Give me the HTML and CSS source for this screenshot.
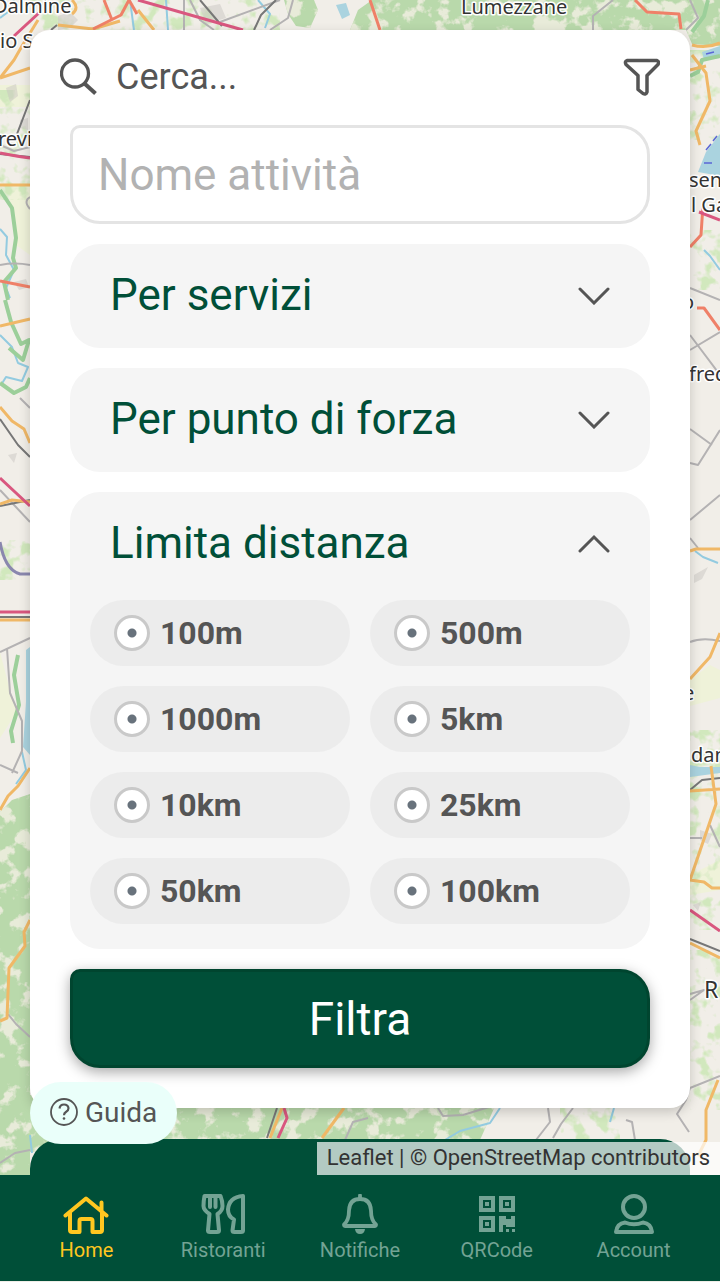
FILE: index.html
```html
<!DOCTYPE html>
<html lang="it">
<head>
<meta charset="utf-8">
<meta name="viewport" content="width=device-width, initial-scale=1">
<title>Cerca attività</title>
<link rel="stylesheet" href="styles.css">
</head>
<body>
<svg class="map" viewBox="0 0 720 1282" preserveAspectRatio="xMidYMid slice" aria-hidden="true">
  <defs>
    <filter id="patches" x="0" y="0" width="100%" height="100%" color-interpolation-filters="sRGB">
      <feTurbulence type="fractalNoise" baseFrequency="0.06" numOctaves="4" seed="8"/>
      <feColorMatrix values="0 0 0 0 .91  0 0 0 0 .92  0 0 0 0 .85  8 0 0 0 -4.2"/>
      <feComposite in2="SourceGraphic" operator="in" result="clearings"/>
      <feMerge><feMergeNode in="SourceGraphic"/><feMergeNode in="clearings"/></feMerge>
    </filter>
    <filter id="speckle" x="0" y="0" width="100%" height="100%" color-interpolation-filters="sRGB">
      <feTurbulence type="fractalNoise" baseFrequency="0.07" numOctaves="3" seed="3"/>
      <feColorMatrix values="0 0 0 0 .82  0 0 0 0 .91  0 0 0 0 .74  6 0 0 0 -3"/>
      <feComposite in2="SourceGraphic" operator="in"/>
    </filter>
  </defs>
  <rect width="720" height="1282" fill="#f1eee8"/>
  <g fill="#eff2d9">
    <path d="M0 85h30v22H0zM8 187l22-2v70l-14-10zM0 652l12 46 6 12-18 28zM690 680l20-15 10 5v28l-30 8zM690 875l30-15v30l-30 5z"/>
  </g>
  <g fill="#b9d9ab" filter="url(#patches)">
    <path d="M284 0h30l4 10-8 18-14-2-8-12zM350 30l8-20 14-10h348v46l-28-2-6-14z"/>
    <path d="M0 812l12-12 18-6v385H0zM30 1095h470l-20 45-20 12H30z"/>
  </g>
  <g fill="#8fb783" filter="url(#speckle)">
    <path d="M30 0h250v30H30zM0 90h30v110H0zM690 50h30v90h-30zM690 230h30v60h-30zM0 540h30v40H0zM690 730h30v200h-30zM690 950h30v160h-30zM560 1105h60v35h-60z"/>
  </g>
  <g fill="#c9c6c2" opacity=".5">
    <path d="M58 16l12-4 8 8-8 8-12 2zM6 88l10-4 2 12-8 6zM20 120l8-2v12l-8-2zM14 282l12-3 3 8-10 3zM8 455l9-2-3 10zM694 575l14-8-6 12-8 4zM700 830l12 4-4 10-8-4zM693 905l8-3-3 9zM200 8l20-4 6 14-20 6z"/>
  </g>
  <g fill="#aad3df">
    <path d="M720 134l-14 18-8 20 22 4zM702 52l18-6v12l-16 2zM336 5l10-2 4 12-8 4zM26 650l4-3v108l-7-8 3-45zM690 765l10 2 20 0v6l-30 4z"/>
  </g>
  <g class="river">
    <path d="M130 0l4 30M166 0l2 30M14 0l-6 12-8 6M0 229l7 8-1 18 8 15-8 18 4 10M0 335l12 12 6 16 10 4-6 14-16-4-5 8M22 752l4 18-10 14M704 250l6 6 10 14M695 551l8 6 15 6M30 1135l2 18M500 1108l-10 15-30 8-15 9M614 1108l-4 14M258 0l12 14-5 14"/>
  </g>
  <g class="park">
    <path d="M0 190l12 18 4 30-3 20 3 10-12 14 4 18M5 300l6 22 10 22 8-4-6 20-14-12M0 383l14 10 12-6 4-9M18 655l-4 20 5 30-8 26 2 12M708 0l-4 16-12 16M690 76l8-4 4-12 18-4"/>
  </g>
  <g class="minor">
    <path d="M0 265q15-3 30 0M30 197q-7 4 0 12M0 145l14 6 16-4M30 408l-10-10M0 490l30 32M0 652l30-14M7 648l3 45 12 28v30l-10 22M0 765l18 8M8 1014l8 10 14 13M0 1163l15-10 15-3M190 0l10 20 14 10M184 0v30M220 22l60-22M270 30l18-12 5-18M593 30v-14l20-16M690 0l8 18-12 12M690 335l30 40M690 350l30-18M690 288l30 12M690 429l22 16M720 430l-22 35-8-2M690 520l30-25M690 538l8 10M690 642q12-5 30-1M690 838h12M710 825l10 22M720 1076l-30 12-4 12-9 14 12 18M690 994l14-4-14 10M438 1108l5 8 20-1 26-8M548 1108l2 14-14 18M573 1108l-12 16-8 14M626 1120l6 2 3 18M345 1140l8-18 15-4"/>
  </g>
  <g class="rail"><path d="M57 25l-6 5M30 100l-13 34M0 419l18 26 12 12M0 154l30 3M200 0l22 26M276 0l-15 15-7 15M720 778l-18 2-12 10M690 939l30 12M0 617h30M0 506l30-6M277 1108l-10 30"/></g>
  <g class="secondary">
    <path d="M0 78l14-18 8-14 16-26M0 78l30-10M58 25l35 4 27-8M138 10l16 20M72 0q8 8 0 14M0 185h30M0 326l30-7M0 407l12 14 12 8 6 14M0 504l12-4 18 2M0 620h30M30 768l-12 18-10 10-8 14M30 920l-6 12 1 14-16 22-2 50-7 3M692 45q14 4 28-2M692 55l14 18 4 28-14 30 4 14M690 70l16-4M690 551l6-2h24M720 633l-10 24-20 22M711 766l5 38-26 76M690 880l14 2 8 6h8M690 943l30 15M344 1108l-22 30M282 1108l-12 30M718 1080l-12 30v30l-8 16M690 791l30-2"/>
  </g>
  <g class="primary"><path d="M104 0l8 20M93 29l28-14 8-15 8 14M370 0l10 30M635 0l12 12 32 2 2 15M0 281l30 6M703 205l-2 30-11 12M697 308h7l16 22"/></g>
  <g class="motorway"><path d="M14 36l26-24M138 0l105 30M0 153q20 4 30 5M0 478l30 28M0 612h30M699 212l21 8M690 910l30 21M284 1108l3 10-9 20"/></g>
  <path d="M0 542q5 28 20 32h10" fill="none" stroke="#8a87ae" stroke-width="3"/>
  <g stroke="#5b67d6" stroke-width="1.5"><path d="M706 54l8-2M706 150l5-6M713 141l4-5M704 163h8M714 178h6"/></g>
  <g class="place">
    <text x="-7" y="13">Dalmine</text>
    <text x="0" y="48">io S</text>
    <text x="-2" y="146">revi</text>
    <text x="461" y="14">Lumezzane</text>
    <text x="689" y="187">sen</text>
    <text x="691" y="212">l Ga</text>
    <text x="682" y="309">o</text>
    <text x="689" y="381">fred</text>
    <text x="683" y="700">e</text>
    <text x="691" y="762">dan</text>
    <text class="place-large" x="704" y="998">R</text>
  </g>
</svg>

<div class="app">
  <main class="stage">
    <form class="panel">
      <div class="search">
        <svg class="icon" viewBox="0 0 38 38" aria-hidden="true"><circle cx="15" cy="15.500" r="13.500" fill="none" stroke="currentColor" stroke-width="3.300"/><path d="M24.500 25.500l11 10" stroke="currentColor" stroke-width="4"/></svg>
        <input class="search-input" type="search" placeholder="Cerca..." aria-label="Cerca">
        <button class="icon-button" type="button" aria-label="Filtri">
          <svg class="icon" viewBox="0 0 38 38" aria-hidden="true"><path d="M5 2.500h30q2.500 1 1 4L25 17.500V34q-1 3-4 1.500l-5-4v-14L4 6.500q-1.500-3 1-4z" fill="none" stroke="currentColor" stroke-width="3.500" stroke-linejoin="round"/></svg>
        </button>
      </div>
      <div class="filters">
        <input class="name-input" type="text" placeholder="Nome attività" aria-label="Nome attività">
        <section class="group">
          <button class="group-toggle" type="button" aria-expanded="false">Per servizi
            <svg class="chevron" viewBox="0 0 32 20" aria-hidden="true"><path d="M2 4l14 14L30 4"/></svg></button>
        </section>
        <section class="group">
          <button class="group-toggle" type="button" aria-expanded="false">Per punto di forza
            <svg class="chevron" viewBox="0 0 32 20" aria-hidden="true"><path d="M2 4l14 14L30 4"/></svg></button>
        </section>
        <section class="group">
          <button class="group-toggle" type="button" aria-expanded="true">Limita distanza
            <svg class="chevron" viewBox="0 0 32 20" aria-hidden="true"><path d="M2 18L16 4l14 14"/></svg></button>
          <div class="options">
            <label class="option"><input class="radio" type="radio" name="distanza">100m</label>
            <label class="option"><input class="radio" type="radio" name="distanza">500m</label>
            <label class="option"><input class="radio" type="radio" name="distanza">1000m</label>
            <label class="option"><input class="radio" type="radio" name="distanza">5km</label>
            <label class="option"><input class="radio" type="radio" name="distanza">10km</label>
            <label class="option"><input class="radio" type="radio" name="distanza">25km</label>
            <label class="option"><input class="radio" type="radio" name="distanza">50km</label>
            <label class="option"><input class="radio" type="radio" name="distanza">100km</label>
          </div>
        </section>
        <button class="submit" type="button">Filtra</button>
      </div>
    </form>
    <div class="sheet"></div>
    <button class="help" type="button">
      <svg class="help-icon" viewBox="0 0 28 28" fill="none" stroke="currentColor" aria-hidden="true"><circle cx="14" cy="14" r="13" stroke-width="1.800"/><path d="M9.500 10.500q.5-4 4.500-4t4.500 3.700q0 2.300-2.600 3.800Q14 15.200 14 17.200" stroke-width="2.200"/><circle cx="14" cy="20.500" r="1.300" fill="currentColor" stroke="none"/></svg>
      Guida
    </button>
    <div class="attribution"><a href="#leaflet">Leaflet</a> | © <a href="#osm">OpenStreetMap</a> contributors</div>
  </main>
  <nav class="tabs">
    <a class="tab tab-active" href="#home" aria-current="page">
      <svg class="tab-icon" viewBox="0 0 46 40" fill="none" stroke="currentColor" stroke-width="4" stroke-linejoin="round" stroke-linecap="round" aria-hidden="true"><path d="M2.500 21.500L23 4.500l20.500 17M7 19v17q0 2 2 2h7.500V27q0-2 2-2h9q2 0 2 2v11H37q2 0 2-2V19M38.500 8.500v8"/></svg>
      Home</a>
    <a class="tab" href="#ristoranti">
      <svg class="tab-icon" viewBox="0 0 46 40" fill="none" stroke="currentColor" stroke-width="4" stroke-linejoin="round" stroke-linecap="round" aria-hidden="true"><path d="M4.500 2h16q2 5 2 10 0 5-5 8l1.500 16.500q0 1.500-2 1.500H10q-2 0-2-1.500L9.500 20q-6-4-6-8 0-5 1-10zM10 3v10M15.500 3v10M43 2v34.500q0 1.500-2 1.500h-6.500q-2 0-2-1.500l1.500-11q-6-3-6-10Q29 3 43 2z"/></svg>
      Ristoranti</a>
    <a class="tab" href="#notifiche">
      <svg class="tab-icon" viewBox="0 0 46 40" aria-hidden="true"><path d="M23 1.500V5M7 30.500q5-4 5-14Q12.500 5 23 5t11 11.500q0 10 5 14 0 1.500-1.500 1.500h-29Q7 32 7 30.500z" fill="none" stroke="currentColor" stroke-width="3.800" stroke-linejoin="round" stroke-linecap="round"/><path d="M18 35h10q-.5 5-5 5t-5-5z" fill="currentColor"/></svg>
      Notifiche</a>
    <a class="tab" href="#qrcode">
      <svg class="tab-icon" viewBox="0 0 46 40" fill="currentColor" aria-hidden="true"><path fill-rule="evenodd" d="M5 2h16v16H5zM9 6v8h8V6zM25 2h16v16H25zM29 6v8h8V6zM5 22h16v16H5zM9 26v8h8v-8zM11 8h4v4h-4zM31 8h4v4h-4zM11 28h4v4h-4zM25 22h7v3h5v-3h4v11h-9v-2h-3v7h-4zM32 35h3v3h-3zM38 35h3v3h-3z"/></svg>
      QRCode</a>
    <a class="tab" href="#account">
      <svg class="tab-icon" viewBox="0 0 46 40" fill="none" stroke="currentColor" stroke-width="4" stroke-linejoin="round" aria-hidden="true"><circle cx="23" cy="13" r="11"/><path d="M14 28.500q9 3.500 18 0 8 1 9 9.500H5q1-8.500 9-9.500z"/></svg>
      Account</a>
  </nav>
</div>
</body>
</html>
```
FILE: styles.css
```css
* {
  box-sizing: border-box;
}

:root {
  --green: #004f38;
  --ink: #555;
}

body {
  margin: 0;
  color: var(--ink);
  font-family: Roboto, "Liberation Sans", sans-serif;
}

button,
input {
  margin: 0;
  color: inherit;
  font: inherit;
}

a {
  color: inherit;
  text-decoration: none;
}

.map {
  position: absolute;
  inset: 0;
  width: 100%;
  height: 100%;
}

.map .river,
.map .park,
.map .minor,
.map .rail,
.map .secondary,
.map .primary,
.map .motorway {
  fill: none;
  stroke-linejoin: round;
}

.map .river { stroke: #93cbe0; stroke-width: 2; }
.map .park { stroke: #9ccf9a; stroke-width: 4; }
.map .minor { stroke: #b4b2b3; stroke-width: 2; }
.map .rail { stroke: #777; stroke-width: 2; }
.map .secondary { stroke: #f0b867; stroke-width: 3; }
.map .primary { stroke: #ef8068; stroke-width: 3; }
.map .motorway { stroke: #d9577f; stroke-width: 3; }

.map .place {
  fill: #333;
  stroke: #fff;
  stroke-width: 3px;
  stroke-linejoin: round;
  paint-order: stroke;
  font: 20px "Noto Sans", sans-serif;
}

.map .place-large {
  font-size: 23px;
}

.app {
  position: relative;
  display: flex;
  flex-direction: column;
  min-height: 100vh;
  padding-bottom: 1px;
}

.stage {
  position: relative;
  display: flex;
  flex: 1;
  flex-direction: column;
  padding: 30px 30px 0;
}

.panel {
  padding: 28px 30px 40px;
  border-radius: 20px;
  background: #fff;
  box-shadow: 0 4px 12px rgba(0, 0, 0, .18);
}

.search {
  display: flex;
  align-items: center;
  gap: 18px;
}

.icon {
  display: block;
  width: 38px;
  height: 38px;
}

.icon-button {
  padding: 0;
  border: 0;
  background: none;
}

.search-input {
  flex: 1;
  min-width: 0;
  height: 38px;
  padding: 0;
  border: 0;
  background: none;
  font-size: 36px;
  line-height: 38px;
}

.search-input::placeholder {
  color: var(--ink);
}

.filters {
  display: flex;
  flex-direction: column;
  gap: 20px;
  padding: 29px 10px 0;
}

.name-input {
  width: 100%;
  height: 99px;
  padding: 0 25px;
  border: 3px solid #e4e4e4;
  border-radius: 10px 30px 30px;
  background: #fff;
  font-size: 44px;
}

.name-input::placeholder {
  color: #b2b2b2;
}

.group {
  border-radius: 30px;
  background: #f5f5f5;
}

.group-toggle {
  display: flex;
  align-items: center;
  justify-content: space-between;
  width: 100%;
  height: 104px;
  padding: 0 40px 2px;
  border: 0;
  background: none;
  color: var(--green);
  font-size: 44px;
}

.chevron {
  width: 32px;
  height: 20px;
  fill: none;
  stroke: var(--ink);
  stroke-width: 3;
  stroke-linecap: round;
}

.options {
  display: grid;
  grid-template-columns: 1fr 1fr;
  gap: 20px;
  padding: 4px 20px 25px;
}

.option {
  display: flex;
  align-items: center;
  gap: 10px;
  height: 66px;
  padding: 0 24px;
  border-radius: 33px;
  background: #ececec;
  font-size: 32px;
  font-weight: 700;
}

.radio {
  width: 36px;
  height: 36px;
  border: 3px solid #c9c9c9;
  border-radius: 50%;
  background: radial-gradient(circle, #68727c 4px, #fff 5px);
  appearance: none;
}

.submit {
  height: 99px;
  border: 3px solid #00452f;
  border-radius: 10px 30px 30px;
  background: var(--green);
  box-shadow: 0 4px 14px rgba(0, 0, 0, .35);
  color: #fff;
  font-size: 46px;
}

.sheet {
  flex: 1;
  min-height: 36px;
  margin-top: 31px;
  border-radius: 30px 30px 0 0;
  background: var(--green);
}

.help {
  position: absolute;
  bottom: 31px;
  left: 30px;
  display: flex;
  align-items: center;
  gap: 7px;
  height: 62px;
  padding: 0 20px 2px;
  border: 0;
  border-radius: 31px;
  background: #eafffa;
  font-size: 28px;
}

.help-icon {
  width: 28px;
  height: 28px;
}

.attribution {
  position: absolute;
  right: 0;
  bottom: 0;
  padding: 0 10px 2px;
  background: rgba(255, 255, 255, .7);
  color: #333;
  font-size: 22px;
  line-height: 31px;
}

.tabs {
  display: grid;
  grid-template-columns: repeat(5, 1fr);
  height: 106px;
  padding: 19px 18px 0;
  background: var(--green);
}

.tab {
  display: flex;
  flex-direction: column;
  align-items: center;
  gap: 4px;
  color: #73a394;
  font-size: 20px;
  line-height: 24px;
}

.tab-active {
  color: #ffc720;
}

.tab-icon {
  width: 46px;
  height: 40px;
}
```
